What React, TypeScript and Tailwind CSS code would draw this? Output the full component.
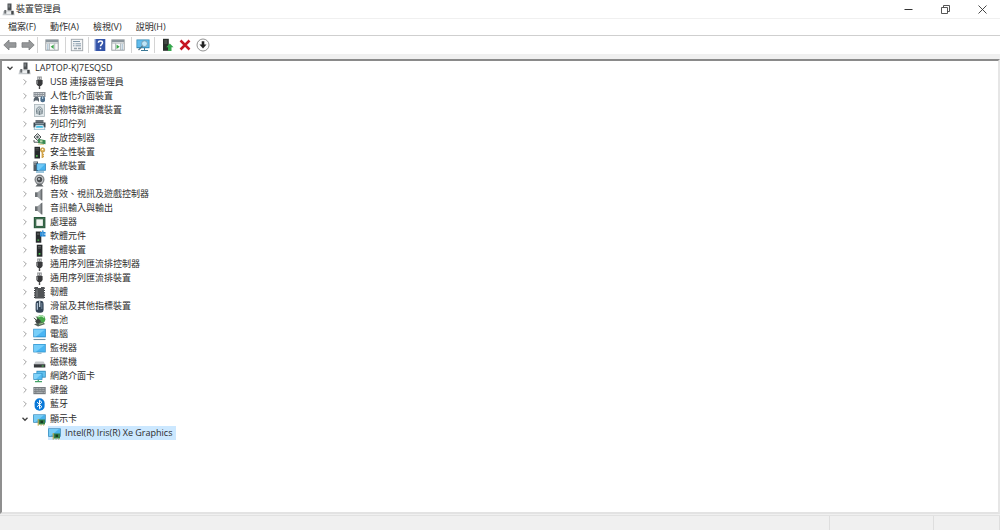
import { useState } from "react";
import type { ReactNode } from "react";

type IconName =
  | "computer" | "usb" | "hid" | "biometric" | "printer" | "storage" | "security" | "system"
  | "camera" | "speaker" | "cpu" | "component" | "tower" | "firmware" | "mouse" | "battery"
  | "desktop" | "monitor" | "disk" | "network" | "keyboard" | "bluetooth" | "display";

const screen = (
  <>
    <rect x="0.3" y="2" width="12.4" height="8.4" fill="#2689c4" />
    <rect x="1" y="2.7" width="11" height="7" fill="#48b5f2" />
    <path d="M1 2.7H12L3 9.7H1Z" fill="#73cdfb" />
  </>
);

const shapes: Record<IconName, ReactNode> = {
  computer: (
    <>
      <rect x="5.5" y="0.5" width="4" height="7" fill="#4b4f52" />
      <rect x="6.5" y="1.5" width="1.2" height="3" fill="#8e9396" />
      <path d="M1.5 8H11.8L12.8 12.3H0.5Z" fill="#c6cacd" />
      <rect x="2.3" y="7" width="2" height="3.5" fill="#6a6e71" />
      <rect x="9.3" y="7.8" width="2.3" height="3.7" fill="#44484b" />
      <path d="M4.5 8.5H9V11H4.5Z" fill="#eceeef" />
    </>
  ),
  usb: (
    <>
      <rect x="4.2" y="0.5" width="4.6" height="3.5" fill="#8a8d8f" />
      <path d="M5.3 1.5V3M7.7 1.5V3" stroke="#eee" strokeWidth="0.9" />
      <path d="M3.4 4H9.6V8L8 10H5L3.4 8Z" fill="#38393b" />
      <path d="M4.5 4.5V8" stroke="#77797b" />
      <path d="M6.5 10V13" stroke="#4b4b4d" strokeWidth="1.4" />
    </>
  ),
  hid: (
    <>
      <rect x="0.5" y="2" width="12" height="5" fill="#8c9298" />
      <path d="M1.5 3.5H11.5M1.5 5.5H11.5" stroke="#d7dbde" strokeDasharray="1 0.7" />
      <path d="M0.7 12V9L2 7H5L6 9V12L4.5 10.5H2.2Z" fill="#58636d" />
      <rect x="7.4" y="6.3" width="4.6" height="6" rx="2" fill="#4c6e8c" />
      <path d="M9.7 6.5V9" stroke="#d1e4f3" />
    </>
  ),
  biometric: (
    <>
      <rect x="1.5" y="0.5" width="10" height="12" fill="#e1e8eb" stroke="#a9b4b9" strokeWidth="0.8" />
      <path d="M4 10C2.5 5 4.5 3 6.5 3S10 5 9 10M5.3 10.5C4.5 6.5 5 4.8 6.5 4.8S8.5 7 7.8 10.7M6.5 6.5V11" fill="none" stroke="#67777f" strokeWidth="0.9" />
    </>
  ),
  printer: (
    <>
      <rect x="2.5" y="2" width="8" height="3" fill="#687178" />
      <path d="M0.5 4.5H12.5V9.5H0.5Z" fill="#3c4850" />
      <path d="M2 5.2H11V6.2H2Z" fill="#9ba9b2" />
      <path d="M2.8 7H10.2L12 11.5H1Z" fill="#eef4f8" stroke="#77a7bd" strokeWidth="0.6" />
      <path d="M3.4 8H9.6L10 9.7H3Z" fill="#43bde3" />
    </>
  ),
  storage: (
    <>
      <path d="M1 5L4.5 1.5L8 5L4.5 8.5Z" fill="#d5d8d9" stroke="#515658" />
      <circle cx="4.5" cy="5" r="1.2" fill="#5b6265" />
      <path d="M1 8V10.2H6" fill="none" stroke="#52585b" />
      <path d="M5 6.8L12.5 8.3V12.3L5 11Z" fill="#398851" />
      <path d="M7 8.3H9.5V10.4H7Z" fill="#b8d7ad" />
      <path d="M6 11.5V12.7M8 11.8V13M10 12V13" stroke="#bba039" />
    </>
  ),
  security: (
    <>
      <rect x="1.5" y="0.8" width="5.5" height="11.7" fill="#25292b" />
      <path d="M2.5 2.5H5.8M2.5 4H5.8" stroke="#666" strokeWidth="0.6" />
      <rect x="3" y="9.2" width="1.7" height="1.5" fill="#50c450" />
      <circle cx="9.6" cy="4" r="2.2" fill="#e0b354" stroke="#a67b28" strokeWidth="0.6" />
      <circle cx="9.6" cy="3.5" r="0.7" fill="#fff" />
      <path d="M9.3 6V12M9.5 8.5H11M9.5 10.5H11" stroke="#d1a34a" strokeWidth="1.4" />
    </>
  ),
  system: (
    <>
      <path d="M0.5 1.5H5V11H0.5Z" fill="#505b62" />
      <path d="M1 2.5H4M1 4H3" stroke="#bbc4ca" strokeWidth="0.7" />
      <rect x="3.5" y="3.5" width="9.3" height="7.2" fill="#237eb7" />
      <rect x="4.2" y="4.2" width="7.9" height="5.7" fill="#47b3ef" />
      <path d="M4.2 4.2H12L6 9.9H4.2Z" fill="#72c9f6" />
      <path d="M3 12H11" stroke="#3e8db9" />
    </>
  ),
  camera: (
    <>
      <circle cx="6.5" cy="5.6" r="5" fill="#85898c" />
      <circle cx="6.5" cy="5.6" r="3.6" fill="#d9dbdd" />
      <circle cx="6.5" cy="5.6" r="2.8" fill="#4a4e51" />
      <circle cx="6" cy="5" r="1.1" fill="#bdc3c8" />
      <path d="M4.5 10H8.5L10.5 12.5H2.5Z" fill="#606568" />
    </>
  ),
  speaker: (
    <>
      <rect x="2" y="4.3" width="3" height="4.7" fill="#6c7174" />
      <path d="M4.5 4.3L9 0.7V12.7L4.5 9Z" fill="#a2a6a9" />
      <path d="M7.6 1.8L9.4 0.4V12.8L7.6 11.4Z" fill="#6b6f72" />
    </>
  ),
  cpu: (
    <>
      <rect x="0.8" y="1" width="11.6" height="11.2" fill="#28563a" />
      <rect x="2.2" y="2.2" width="8.8" height="8.8" fill="none" stroke="#5b8b6a" strokeWidth="0.5" />
      <rect x="3.3" y="3.3" width="6.6" height="6.6" fill="#f3f6f2" />
    </>
  ),
  component: (
    <>
      <rect x="2.8" y="1.5" width="5.5" height="11.2" fill="#282c2e" />
      <path d="M4 4H6.5" stroke="#777" />
      <rect x="4.4" y="9.5" width="1.7" height="1.3" fill="#4bbd4c" />
      <path d="M7 2H9V0.5H10.5V2H12.5V3.7H11V4.5H12.5V6.5H7Z" fill="#2384d2" />
      <path d="M7 4H12M9.7 1V6" stroke="#83c0ec" strokeWidth="0.5" />
    </>
  ),
  tower: (
    <>
      <rect x="3.8" y="0.7" width="5.6" height="12" fill="#262a2c" />
      <path d="M5 2.5H8M5 4H8" stroke="#777" strokeWidth="0.7" />
      <rect x="5.7" y="9" width="1.7" height="1.7" fill="#4dc850" />
    </>
  ),
  firmware: (
    <>
      <path d="M2 1H5V2H8V1H11V12.5H2Z" fill="#505356" />
      <path d="M1 2.2H2M1 4.5H2M1 6.8H2M1 9.1H2M1 11.4H2M11 2.2H12M11 4.5H12M11 6.8H12M11 9.1H12M11 11.4H12" stroke="#34373a" strokeWidth="1.2" />
      <path d="M4 3.5V11" stroke="#787c7f" strokeWidth="1.2" />
    </>
  ),
  mouse: (
    <>
      <rect x="2.6" y="0.7" width="8" height="12" rx="3.2" fill="#344557" />
      <path d="M4.4 3V9.8" stroke="#a9bdd0" strokeWidth="1.2" />
      <path d="M6.7 1V7" stroke="#d4e0ea" strokeWidth="1.2" />
      <path d="M8.8 3V9" stroke="#6f8497" />
    </>
  ),
  battery: (
    <>
      <circle cx="8" cy="5.3" r="4.3" fill="#46a84a" />
      <path d="M5.3 3C7 1.5 9.5 1.5 11 3.5" fill="none" stroke="#c8efc6" strokeWidth="1.3" />
      <path d="M1 3.8L3.5 6.5M3.2 2.5L5 4.7" stroke="#424846" />
      <path d="M2 7L5.2 4.5L8 7L6.5 10H4Z" fill="#3c4440" />
      <path d="M1 10.2L9 8L12.3 10L5 12.5Z" fill="#55615a" />
      <path d="M6 10.3L10.2 9.2" stroke="#9dcb87" />
    </>
  ),
  desktop: (
    <>
      <rect x="0.3" y="0.8" width="12.5" height="8.5" fill="#2388c6" />
      <rect x="1" y="1.5" width="11.1" height="7" fill="#4ab5f4" />
      <path d="M1 1.5H12L3 8.5H1Z" fill="#78cff9" />
      <path d="M0.5 11.5H12.5" stroke="#7391a2" strokeWidth="1.1" />
    </>
  ),
  monitor: <>{screen}<path d="M4.5 11.3H8.5" stroke="#7997aa" strokeWidth="0.8" /></>,
  disk: (
    <>
      <path d="M2.5 5.5H10.5L12.5 9H0.5Z" fill="#c4c7ca" />
      <rect x="0.9" y="8.3" width="11.4" height="3.2" fill="#35383b" />
      <path d="M8.7 10H10.8" stroke="#57c963" />
    </>
  ),
  network: (
    <>
      <rect x="3.5" y="0.8" width="9.2" height="6.8" fill="#2080b5" />
      <rect x="4.2" y="1.5" width="7.8" height="5.3" fill="#60c0ed" />
      <rect x="0.4" y="3.2" width="9" height="6.6" fill="#2385bc" />
      <rect x="1" y="3.8" width="7.8" height="5.3" fill="#53bbf2" />
      <path d="M1 3.8H8.8L3 9.1H1Z" fill="#80d3fa" />
      <path d="M5.3 9.8V12M2 11.6H9" stroke="#45a267" strokeWidth="1.3" />
    </>
  ),
  keyboard: (
    <>
      <rect x="0.4" y="3" width="12.3" height="7.2" fill="#777c80" />
      <path d="M1.2 4.5H12M1.2 6.3H12" stroke="#c4c8ca" strokeWidth="0.8" strokeDasharray="1 0.5" />
      <path d="M1.2 8.3H2.5M3.3 8.3H9.8M10.5 8.3H12" stroke="#c4c8ca" strokeWidth="0.8" />
    </>
  ),
  bluetooth: (
    <>
      <rect x="1.6" y="0.3" width="10" height="12.5" rx="4.9" fill="#0878d8" />
      <path d="M4 4.2L8.9 8.7L6.5 10.8V2.2L8.9 4.3L4 8.8" fill="none" stroke="#fff" strokeWidth="1" />
    </>
  ),
  display: (
    <>
      <rect x="0.2" y="1.4" width="12.5" height="8.3" fill="#267fb3" />
      <rect x="0.9" y="2" width="11.1" height="7" fill="#49b2eb" />
      <path d="M0.9 2H11L2.5 9H0.9Z" fill="#77ccf5" />
      <path d="M5.5 6.5H12V11.5H5.5Z" fill="#337f47" />
      <rect x="7.5" y="7.6" width="2.5" height="2.4" fill="#183c25" />
      <path d="M5.2 6V12.7M7.5 12H8.7M10 12H11.2" stroke="#c2a440" />
    </>
  ),
};

function Icon({ name }: { name: IconName }) {
  return (
    <svg viewBox="0 0 13 13" className="size-[13px] shrink-0" aria-hidden="true">
      {shapes[name]}
    </svg>
  );
}

const categories: { icon: IconName; label: string }[] = [
  { icon: "usb", label: "USB 連接器管理員" },
  { icon: "hid", label: "人性化介面裝置" },
  { icon: "biometric", label: "生物特徵辨識裝置" },
  { icon: "printer", label: "列印佇列" },
  { icon: "storage", label: "存放控制器" },
  { icon: "security", label: "安全性裝置" },
  { icon: "system", label: "系統裝置" },
  { icon: "camera", label: "相機" },
  { icon: "speaker", label: "音效、視訊及遊戲控制器" },
  { icon: "speaker", label: "音訊輸入與輸出" },
  { icon: "cpu", label: "處理器" },
  { icon: "component", label: "軟體元件" },
  { icon: "tower", label: "軟體裝置" },
  { icon: "usb", label: "通用序列匯流排控制器" },
  { icon: "usb", label: "通用序列匯流排裝置" },
  { icon: "firmware", label: "韌體" },
  { icon: "mouse", label: "滑鼠及其他指標裝置" },
  { icon: "battery", label: "電池" },
  { icon: "desktop", label: "電腦" },
  { icon: "monitor", label: "監視器" },
  { icon: "disk", label: "磁碟機" },
  { icon: "network", label: "網路介面卡" },
  { icon: "keyboard", label: "鍵盤" },
  { icon: "bluetooth", label: "藍牙" },
];

function Chevron({ open, label, onClick }: { open: boolean; label: string; onClick?: () => void }) {
  return (
    <button type="button" aria-label={label} aria-expanded={open} onClick={onClick} className="flex h-3.5 w-[15px] shrink-0 items-center justify-center pr-0.5">
      <svg viewBox="0 0 8 8" className="size-2" fill="none" aria-hidden="true">
        {open ? <path d="M1.5 2.8L4 5.3L6.5 2.8" stroke="#404040" strokeWidth="1.3" /> : <path d="M2.6 1.3L5.3 4L2.6 6.7" stroke="#a0a0a0" />}
      </svg>
    </button>
  );
}

function ToolButton({ label, className, children }: { label: string; className: string; children: ReactNode }) {
  return (
    <button type="button" aria-label={label} className={`flex h-4 shrink-0 items-center justify-center hover:bg-[#e5f3ff] ${className}`}>
      <svg viewBox="0 0 14 14" className="size-3.5 shrink-0" aria-hidden="true">{children}</svg>
    </button>
  );
}

const Divider = () => <span className="h-4 w-px shrink-0 bg-[#d4d4d4]" />;

const consoleWindow = (
  <>
    <rect x="0.8" y="1.8" width="12.4" height="10.4" fill="#fafafa" stroke="#92989c" strokeWidth="0.9" />
    <rect x="1" y="2" width="12" height="2.3" fill="#8b969d" />
    <path d="M1 5.4H13" stroke="#b5bbc0" strokeWidth="0.7" />
  </>
);

const menus = ["檔案(F)", "動作(A)", "檢視(V)", "說明(H)"];

export default function App() {
  const [rootOpen, setRootOpen] = useState(true);
  const [displayOpen, setDisplayOpen] = useState(true);

  return (
    <div lang="zh-Hant" className="flex min-h-screen flex-col bg-[#f0f0f0] font-['Open_Sans','Noto_Sans_CJK_TC',sans-serif] text-[9px] leading-[14px] text-[#2c2c2c]">
      <header className="flex h-[18px] items-center gap-px bg-white pl-0.5">
        <Icon name="computer" />
        <h1 className="grow">裝置管理員</h1>
        <button type="button" aria-label="最小化" className="flex h-[18px] w-9 items-center justify-center">
          <svg viewBox="0 0 9 9" className="size-[9px]"><path d="M0.5 4.5H8.5" stroke="#333" /></svg>
        </button>
        <button type="button" aria-label="還原" className="flex h-[18px] w-9 items-center justify-center">
          <svg viewBox="0 0 9 9" className="size-[9px]" fill="none" stroke="#444" strokeWidth="0.9"><path d="M0.5 2.5H6.5V8.5H0.5ZM2.5 2.5V0.5H8.5V6.5H6.5" /></svg>
        </button>
        <button type="button" aria-label="關閉" className="flex h-[18px] w-9 items-center justify-center">
          <svg viewBox="0 0 9 9" className="size-[9px]" stroke="#333" strokeWidth="0.9"><path d="M0.5 0.5L8.5 8.5M8.5 0.5L0.5 8.5" /></svg>
        </button>
      </header>

      <nav aria-label="功能表" className="flex h-[18px] items-center gap-3.5 border-y border-t-[#f0f0f0] border-b-[#cfcfcf] bg-white pl-2">
        {menus.map((m) => (
          <button type="button" key={m}>{m}</button>
        ))}
      </nav>

      <div role="toolbar" aria-label="工具列" className="flex h-[18px] items-center bg-white pl-px">
        <ToolButton label="上一頁" className="w-[18px]">
          <path d="M0.8 7L6 2V4.7H13V9.3H6V12Z" fill="#96989a" stroke="#7a7c7e" strokeWidth="0.8" />
        </ToolButton>
        <ToolButton label="下一頁" className="w-[18px]">
          <path d="M13.2 7L8 2V4.7H1V9.3H8V12Z" fill="#96989a" stroke="#7a7c7e" strokeWidth="0.8" />
        </ToolButton>
        <Divider />
        <ToolButton label="顯示/隱藏主控台樹狀目錄" className="w-[27px]">
          {consoleWindow}
          <path d="M4.5 5.5V12M9.7 5.5V12" stroke="#a4adb3" strokeWidth="0.8" />
          <path d="M2 7H3.6M2 9H3.6M2 11H3.6" stroke="#5386aa" strokeWidth="0.8" />
          <path d="M8.7 6.5V11L5.7 8.8Z" fill="#3ca54a" />
        </ToolButton>
        <Divider />
        <ToolButton label="內容" className="w-[22px]">
          <rect x="1.3" y="1.3" width="11.4" height="11.4" fill="#f4f5f6" stroke="#9da3a8" strokeWidth="0.9" />
          <path d="M3 3.5H10M3 5.8H4.5M5.5 5.8H11M3 7.8H4.5M5.5 7.8H11" stroke="#7890a1" strokeWidth="0.9" />
          <path d="M4 10.5H7M8 10.5H11" stroke="#96a3ac" strokeWidth="1.3" />
        </ToolButton>
        <Divider />
        <ToolButton label="說明" className="w-[22px]">
          <rect x="1.8" y="1" width="10.5" height="12" fill="#3454a8" />
          <path d="M1.8 1H3.1V13H1.8Z" fill="#7890cc" />
          <path d="M5.4 4.8C5.4 2.5 9.5 2.5 9.5 4.8C9.5 6.4 7.5 6.4 7.5 8.3M7.5 9.7V11.2" fill="none" stroke="#fff" strokeWidth="1.5" />
        </ToolButton>
        <ToolButton label="顯示/隱藏執行窗格" className="mr-1.5 w-3.5">
          {consoleWindow}
          <path d="M4.5 5.5V12M9.5 5.5V12" stroke="#a4adb3" strokeWidth="0.8" />
          <path d="M10.5 7H12M10.5 9H12M10.5 11H12" stroke="#5386aa" strokeWidth="0.8" />
          <path d="M5.5 6.5V11L8.7 8.8Z" fill="#3ca54a" />
        </ToolButton>
        <Divider />
        <ToolButton label="掃描硬體變更" className="w-[22px]">
          <rect x="0.5" y="1.5" width="13" height="8.7" fill="#2780ae" />
          <rect x="1.2" y="2.2" width="11.6" height="7.1" fill="#61bced" />
          <path d="M5 12.5H12M8.5 10V12" stroke="#3b7896" />
          <circle cx="8.5" cy="5.7" r="2.9" fill="#bfe5f8" stroke="#6f94a8" strokeWidth="0.8" />
          <path d="M6.5 8L2.5 12" stroke="#527487" strokeWidth="1.2" />
        </ToolButton>
        <Divider />
        <ToolButton label="更新驅動程式" className="ml-1 w-[18px]">
          <rect x="2" y="0.8" width="5.8" height="12" fill="#292e2b" />
          <path d="M3.3 3H6.3M3.3 5H6.3" stroke="#727b74" strokeWidth="0.8" />
          <path d="M8.8 5.5L12.5 9.2H10.5V13H7V9.2H5.2Z" fill="#35a64c" />
        </ToolButton>
        <ToolButton label="解除安裝裝置" className="w-4">
          <path d="M2.5 2.5L11.5 11.5M11.5 2.5L2.5 11.5" stroke="#c51420" strokeWidth="2.5" />
        </ToolButton>
        <ToolButton label="停用裝置" className="w-5">
          <circle cx="7" cy="7" r="6" fill="#fdfdfd" stroke="#777" strokeWidth="0.8" />
          <path d="M5.7 3.3H8.3V6.5H10.5L7 10.5L3.5 6.5H5.7Z" fill="#222" />
        </ToolButton>
      </div>

      <main className="mt-[5px] flex grow flex-col border-2 border-t-[#8a8a8a] border-r-[#e6e6e6] border-b-[#e3e3e3] border-l-[#8f8f8f] bg-white pl-px">
        <ul role="tree" aria-label="裝置">
          <li role="treeitem" aria-expanded={rootOpen}>
            <div className="flex h-3.5 items-center">
              <Chevron open={rootOpen} label="LAPTOP-KJ7ESQSD" onClick={() => setRootOpen(!rootOpen)} />
              <Icon name="computer" />
              <span className="pl-1">LAPTOP-KJ7ESQSD</span>
            </div>
            {rootOpen && (
              <ul role="group" className="pl-[15px]">
                {categories.map((c) => (
                  <li role="treeitem" aria-expanded={false} key={c.label} className="flex h-3.5 items-center">
                    <Chevron open={false} label={c.label} />
                    <Icon name={c.icon} />
                    <span className="pl-1">{c.label}</span>
                  </li>
                ))}
                <li role="treeitem" aria-expanded={displayOpen} className="pt-px">
                  <div className="flex h-3.5 items-center">
                    <Chevron open={displayOpen} label="顯示卡" onClick={() => setDisplayOpen(!displayOpen)} />
                    <Icon name="display" />
                    <span className="pl-1">顯示卡</span>
                  </div>
                  {displayOpen && (
                    <ul role="group" className="flex pl-[30px]">
                      <li role="treeitem" aria-selected="true" className="flex items-center gap-1 bg-[#cce8ff] pr-1">
                        <Icon name="display" />
                        <span>Intel(R) Iris(R) Xe Graphics</span>
                      </li>
                    </ul>
                  )}
                </li>
              </ul>
            )}
          </li>
        </ul>
      </main>

      <footer className="mt-px flex h-[15px] border-t border-[#e2e2e2]">
        <span className="grow" />
        <span className="w-[104px] border-l border-[#dedede]" />
        <span className="w-[67px] border-x border-[#dedede]" />
      </footer>
    </div>
  );
}
